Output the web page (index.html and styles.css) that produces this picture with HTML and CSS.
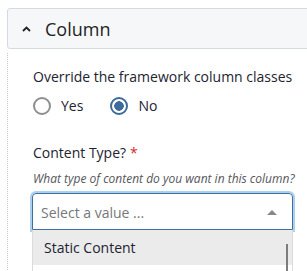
FILE: index.html
```html
<!DOCTYPE html>
<html lang="en">
<head>
  <meta charset="UTF-8">
  <title>Column</title>
  <link rel="stylesheet" href="styles.css">
</head>
<body>

  <div class="panel">
    <!-- collapsible header -->
    <div class="panel-header">
      <svg class="chevron" width="9" height="8" viewBox="0 0 9 8">
        <path d="M1 6 L4.5 2.5 L8 6" fill="none" stroke="#222" stroke-width="1.8"/>
      </svg>
      <span class="panel-title">Column</span>
    </div>

    <div class="panel-body">
      <div class="field">
        <div class="field-label">Override the framework column classes</div>
        <div class="radios">
          <label class="radio"><span class="radio-dot"></span>Yes</label>
          <label class="radio"><span class="radio-dot checked"></span>No</label>
        </div>
      </div>

      <div class="field">
        <div class="field-label">Content Type?<span class="required">*</span></div>
        <div class="field-help">What type of content do you want in this column?</div>

        <div class="select open">
          <span class="select-placeholder">Select a value ...</span>
          <span class="select-arrow"></span>
        </div>
        <div class="dropdown">
          <div class="option active">Static Content</div>
          <div class="option"></div>
          <div class="scrollbar"></div>
        </div>
      </div>
    </div>
  </div>

</body>
</html>
```

FILE: styles.css
```css
body {
  margin: 0;
  font-family: 'Open Sans', sans-serif;
  color: #222330;
  background: #fff;
  overflow: hidden;
}

.panel {
  padding: 8px 0 0 7px;
}

.panel-header {
  display: flex;
  align-items: center;
  height: 39px;
  margin-right: -20px;
  padding-left: 14px;
  background-color: #f5f7f9;
  border: 1px solid #d5dae0;
  border-radius: 3px;
}

.chevron {
  margin-right: 14px;
}

.panel-title {
  font-size: 18px;
  color: #1f1f24;
}

.panel-body {
  margin-top: 4px;
  padding: 14px 0 0 25px;
  border-left: 1px dotted #c8c8c8;
}

.field {
  margin-bottom: 28px;
}

.field-label {
  font-size: 14px;
  line-height: 20px;
}

.required {
  color: #d52a1e;
  margin-left: 4px;
}

.radios {
  display: flex;
  gap: 27px;
  margin-top: 9px;
}

.radio {
  display: flex;
  align-items: center;
  font-size: 14px;
}

.radio-dot {
  box-sizing: border-box;
  width: 18px;
  height: 18px;
  border: 2px solid #8f8f8f;
  border-radius: 50%;
  margin-right: 10px;
}

.radio-dot.checked {
  border-color: #3d6b9a;
  background: radial-gradient(circle, #3d6b9a 0 4.5px, #fff 5px);
}

.field-help {
  font-size: 12px;
  font-style: italic;
  color: #55565b;
  margin-top: 7px;
}

.select {
  display: flex;
  align-items: center;
  justify-content: space-between;
  box-sizing: border-box;
  width: 261px;
  height: 37px;
  margin: 6px 0 0 -1px;
  padding: 2px 15px 0 8px;
  border: 1px solid #3f6f9c;
  border-radius: 4px 4px 0 0;
  box-shadow: 0 0 0 2px #acd0f0;
}

.select-placeholder {
  font-size: 14px;
  color: #76777c;
}

.select-arrow {
  width: 0;
  height: 0;
  margin-top: -1px;
  border-left: 5px solid transparent;
  border-right: 5px solid transparent;
  border-bottom: 5px solid #888;
}

.dropdown {
  position: relative;
  width: 261px;
  margin-left: -1px;
  box-sizing: border-box;
  border-left: 1px solid #dcdcdc;
  border-right: 1px solid #dcdcdc;
}

.option {
  height: 35px;
  line-height: 35px;
  padding-left: 11px;
  font-size: 14px;
}

.option.active {
  background-color: #ebebeb;
}

.scrollbar {
  position: absolute;
  top: 14px;
  right: 4px;
  width: 2px;
  height: 60px;
  background: #7d7d7d;
}
```
